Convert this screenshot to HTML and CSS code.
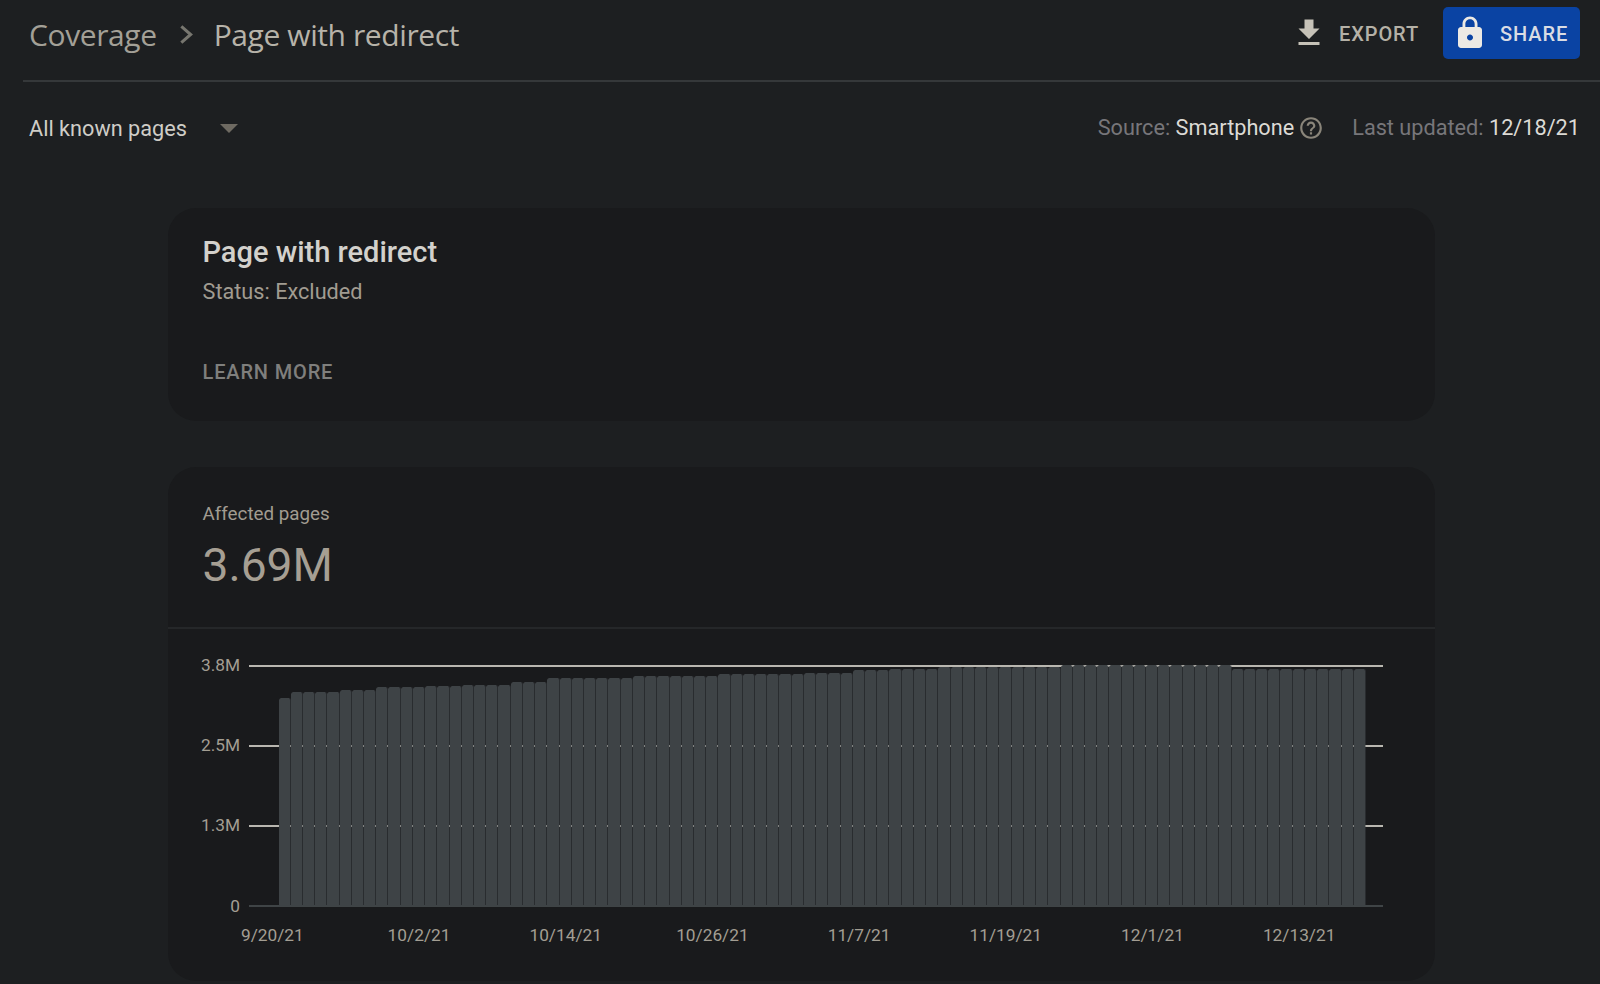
FILE: index.html
```html
<!DOCTYPE html>
<html lang="en">
<head>
<meta charset="utf-8">
<title>Page with redirect</title>
<link rel="stylesheet" href="styles.css">
</head>
<body>
<header class="topbar">
  <nav class="crumbs">
    <span class="crumb">Coverage</span>
    <svg class="chev" viewBox="0 0 12 18"><polyline points="2,2 10,9 2,16"/></svg>
    <span class="crumb current">Page with redirect</span>
  </nav>
  <div class="actions">
    <button class="export">
      <svg class="ico-dl" viewBox="0 0 24 24"><path d="M19 9h-4V3H9v6H5l7 7 7-7zM5 18v2h14v-2H5z"/></svg>
      <span>EXPORT</span>
    </button>
    <button class="share">
      <svg class="ico-lock" viewBox="0 0 24 24"><path d="M18 8h-1V6c0-2.76-2.24-5-5-5S7 3.24 7 6v2H6c-1.1 0-2 .9-2 2v10c0 1.1.9 2 2 2h12c1.1 0 2-.9 2-2V10c0-1.1-.9-2-2-2zm-6 9c-1.1 0-2-.9-2-2s.9-2 2-2 2 .9 2 2-.9 2-2 2zm3.1-9H8.9V6c0-1.71 1.39-3.1 3.1-3.1 1.71 0 3.1 1.39 3.1 3.1v2z"/></svg>
      <span>SHARE</span>
    </button>
  </div>
</header>
<section class="filters">
  <div class="select"><span>All known pages</span><i class="caret"></i></div>
  <div class="meta">
    <span class="dim">Source: <b>Smartphone</b></span>
    <svg class="ico-help" viewBox="0 0 24 24"><path d="M11 18h2v-2h-2v2zm1-16C6.48 2 2 6.48 2 12s4.48 10 10 10 10-4.48 10-10S17.52 2 12 2zm0 18c-4.41 0-8-3.59-8-8s3.59-8 8-8 8 3.59 8 8-3.59 8-8 8zm0-14c-2.21 0-4 1.79-4 4h2c0-1.1.9-2 2-2s2 .9 2 2c0 2-3 1.75-3 5h2c0-2.25 3-2.5 3-5 0-2.21-1.79-4-4-4z"/></svg>
    <span class="dim updated">Last updated: <b>12/18/21</b></span>
  </div>
</section>
<main class="content">
  <section class="card info">
    <h1>Page with redirect</h1>
    <p class="status">Status: Excluded</p>
    <a class="learn">LEARN MORE</a>
  </section>
  <section class="card stats">
    <div class="summary">
      <div class="sum-label">Affected pages</div>
      <div class="sum-value">3.69M</div>
    </div>
    <div class="chart">
      <div class="plot">
        <div class="row"><span class="tick">3.8M</span><i class="rule"></i></div>
        <div class="row"><span class="tick">2.5M</span><i class="rule"></i></div>
        <div class="row"><span class="tick">1.3M</span><i class="rule"></i></div>
        <div class="row base"><span class="tick">0</span><i class="rule"></i></div>
        <div class="bars">
<i style="height:208px"></i><i style="height:214px"></i><i style="height:214px"></i><i style="height:214px"></i><i style="height:214px"></i>
<i style="height:216px"></i><i style="height:216px"></i><i style="height:216px"></i>
<i style="height:219px"></i><i style="height:219px"></i><i style="height:219px"></i><i style="height:219px"></i>
<i style="height:220px"></i><i style="height:220px"></i><i style="height:220px"></i>
<i style="height:221px"></i><i style="height:221px"></i><i style="height:221px"></i><i style="height:221px"></i>
<i style="height:224px"></i><i style="height:224px"></i><i style="height:224px"></i>
<i style="height:228px"></i><i style="height:228px"></i><i style="height:228px"></i><i style="height:228px"></i><i style="height:228px"></i><i style="height:228px"></i><i style="height:228px"></i>
<i style="height:230px"></i><i style="height:230px"></i><i style="height:230px"></i><i style="height:230px"></i><i style="height:230px"></i><i style="height:230px"></i><i style="height:230px"></i>
<i style="height:232px"></i><i style="height:232px"></i><i style="height:232px"></i><i style="height:232px"></i><i style="height:232px"></i><i style="height:232px"></i><i style="height:232px"></i>
<i style="height:233px"></i><i style="height:233px"></i><i style="height:233px"></i><i style="height:233px"></i>
<i style="height:236px"></i><i style="height:236px"></i><i style="height:236px"></i>
<i style="height:237px"></i><i style="height:237px"></i><i style="height:237px"></i><i style="height:237px"></i>
<i style="height:239px"></i><i style="height:239px"></i><i style="height:239px"></i><i style="height:239px"></i><i style="height:239px"></i><i style="height:239px"></i><i style="height:239px"></i><i style="height:239px"></i><i style="height:239px"></i><i style="height:239px"></i>
<i style="height:241px"></i><i style="height:241px"></i><i style="height:241px"></i><i style="height:241px"></i><i style="height:241px"></i><i style="height:241px"></i><i style="height:241px"></i><i style="height:241px"></i><i style="height:241px"></i><i style="height:241px"></i><i style="height:241px"></i><i style="height:241px"></i><i style="height:241px"></i><i style="height:241px"></i>
<i style="height:237px"></i><i style="height:237px"></i><i style="height:237px"></i><i style="height:237px"></i><i style="height:237px"></i><i style="height:237px"></i><i style="height:237px"></i><i style="height:237px"></i><i style="height:237px"></i><i style="height:237px"></i><i style="height:237px"></i>
        </div>
      </div>
      <div class="dates">
        <span>9/20/21</span><span>10/2/21</span><span>10/14/21</span><span>10/26/21</span><span>11/7/21</span><span>11/19/21</span><span>12/1/21</span><span>12/13/21</span>
      </div>
    </div>
  </section>
</main>
</body>
</html>
```

FILE: styles.css
```css
* { box-sizing: border-box; }
html, body { margin: 0; height: 984px; overflow: hidden; }
body {
  background: #1d1f21;
  color: #a8a49a;
  font-family: Roboto, "Liberation Sans", sans-serif;
}

.topbar {
  height: 82px;
  margin-left: 23px;
  padding: 7px 20px 0 6px;
  display: flex;
  justify-content: space-between;
  align-items: flex-start;
  border-bottom: 2px solid #35383a;
}
.crumbs { display: flex; align-items: center; height: 54px; }
.crumb {
  font-family: "Open Sans", sans-serif;
  font-size: 30px;
  letter-spacing: -0.4px;
  color: #a3a097;
}
.crumb.current { color: #b7b3a9; }
.chev { width: 14px; height: 21px; margin: 0 21px 0 22px; fill: none; stroke: #77766f; stroke-width: 2.6; }

.actions { display: flex; align-items: center; gap: 24px; }
button {
  border: 0;
  padding: 0;
  background: none;
  font: 500 20px Roboto, sans-serif;
  letter-spacing: 0.9px;
  display: flex;
  align-items: center;
}
button span { padding-top: 2px; }
.export { color: #b5b1a7; gap: 12px; }
.ico-dl { width: 36px; height: 36px; fill: #c6c2b8; margin-left: -5px; }
.share {
  width: 137px;
  height: 52px;
  background: #0a43a3;
  border-radius: 5px;
  color: #d9dce4;
  padding-left: 9px;
  gap: 12px;
}
.ico-lock { width: 36px; height: 36px; fill: #ece9e4; }

.filters {
  height: 88px;
  padding: 3px 20px 0 29px;
  display: flex;
  justify-content: space-between;
  align-items: center;
}
.select { display: flex; align-items: center; font-size: 21.7px; color: #cfcdc7; gap: 33px; margin-top: 2px; }
.caret {
  width: 0;
  height: 0;
  border-left: 9px solid transparent;
  border-right: 9px solid transparent;
  border-top: 9px solid #6e6a62;
}
.meta { display: flex; align-items: center; font-size: 21.7px; }
.dim { color: #77767a; }
.dim b { font-weight: 400; color: #dcdad5; }
.ico-help { width: 26px; height: 26px; fill: #8a857a; margin-left: 4px; }
.updated { margin-left: 28px; }

.content { padding: 38px 165px 0 167.5px; display: flex; flex-direction: column; gap: 46px; }
.card { background: #191a1c; border-radius: 28px; }
.info { height: 213px; padding: 26px 35px; }
.info h1 { margin: 0; font-size: 29px; line-height: 36px; font-weight: 500; color: #d3d1cc; }
.status { margin: 7px 0 0; font-size: 21.7px; line-height: 30px; color: #a19c91; }
.learn { display: block; margin-top: 50px; font-size: 20px; line-height: 30px; font-weight: 500; letter-spacing: 0.85px; color: #7f7f7d; }

.stats { height: 514px; }
.summary { height: 162px; padding: 35px 35px 0; border-bottom: 2px solid #252729; }
.sum-label { font-size: 18.8px; line-height: 24px; color: #a19c91; }
.sum-value { margin-top: 10px; font-size: 46.2px; line-height: 58px; color: #a69f93; }

.chart { padding-top: 25px; }
.plot {
  position: relative;
  height: 264px;
  display: flex;
  flex-direction: column;
  gap: 56px;
}
.row { height: 24px; display: flex; align-items: center; }
.tick { width: 72.5px; margin-right: 0.5px; margin-bottom: 2px; text-align: right; font-size: 17.3px; color: #a39e93; }
.base .tick { margin-bottom: 0; }
.rule { margin-left: 8.5px; width: 1134px; height: 2px; background: #b9b7b0; }
.base .rule { background: #3f4446; }
.bars {
  position: absolute;
  left: 111px;
  bottom: 12px;
  width: 1087px;
  display: flex;
  align-items: flex-end;
}
.bars i {
  flex: 1;
  background: #3e4346;
  background-clip: padding-box;
  border-right: 1px solid rgba(62, 67, 70, .45);
  border-radius: 2px 2px 0 0;
}

.dates { margin-left: 31.5px; display: grid; grid-template-columns: repeat(8, 146.7px); padding-top: 5px; }
.dates span { text-align: center; font-size: 17.3px; line-height: 24px; color: #a39e93; }
```
